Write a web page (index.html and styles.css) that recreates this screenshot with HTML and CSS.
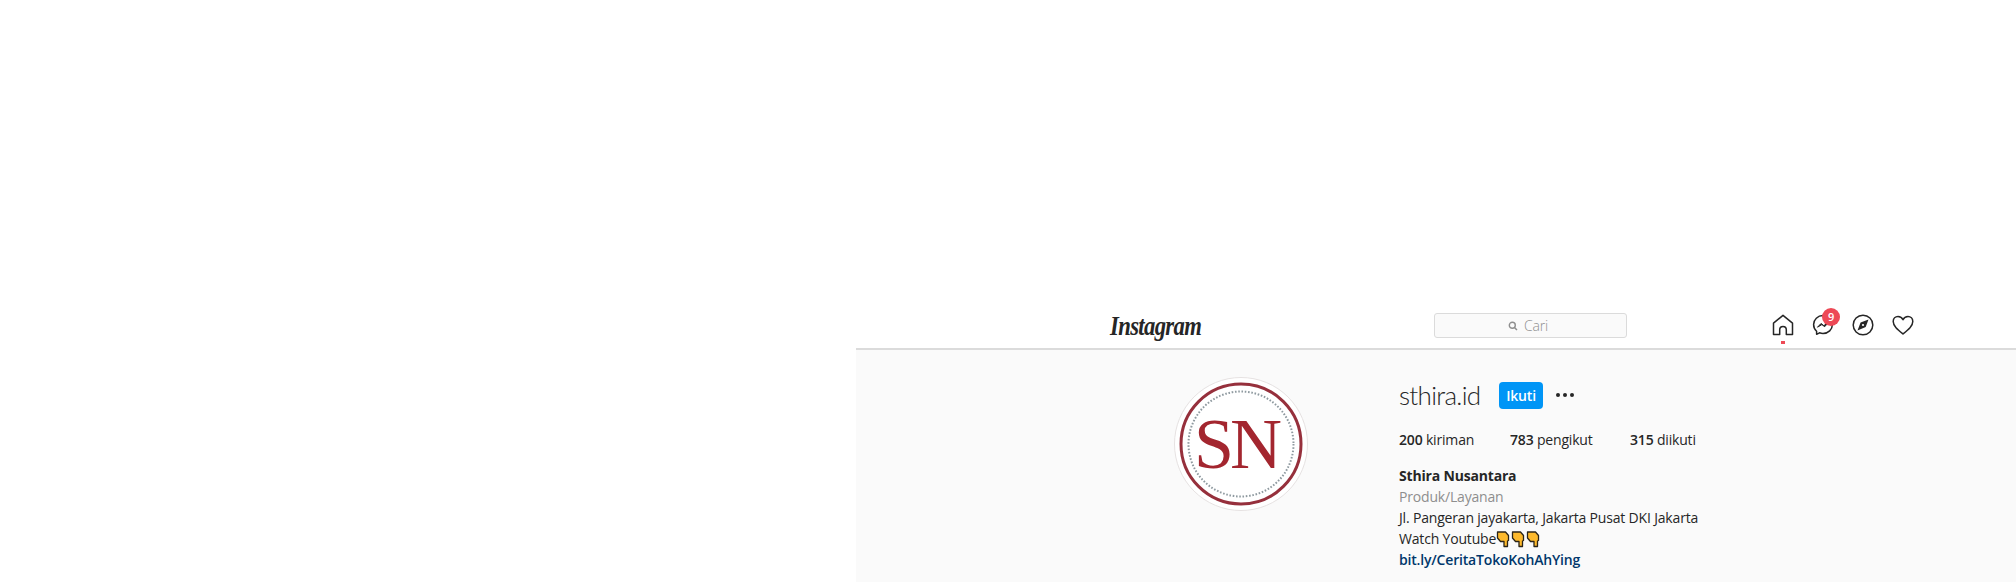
FILE: index.html
```html
<!DOCTYPE html>
<html lang="id">
<head>
<meta charset="utf-8">
<title>sthira.id</title>
<link rel="stylesheet" href="styles.css">
</head>
<body>
<div class="shell">
  <div class="blank"></div>
  <div class="app">
    <header class="nav">
      <div class="logo">Instagram</div>
      <div class="search">
        <svg class="search-icon" viewBox="0 0 10 10" width="10" height="10"><circle cx="4.3" cy="4.3" r="3" fill="none" stroke="#8e8e8e" stroke-width="1.4"/><path d="M6.5 6.500 9 9" stroke="#8e8e8e" stroke-width="1.500"/></svg>
        <span>Cari</span>
      </div>
      <nav class="icons">
        <div class="icon-cell">
          <svg viewBox="0 0 22 22" width="22" height="22"><path d="M1.500 9.200 11 1.300l9.500 7.900v11.300h-6.200v-4.800a3.300 3.300 0 0 0-6.600 0v4.800H1.500z" fill="none" stroke="#262626" stroke-width="1.500" stroke-linejoin="round"/></svg>
          <span class="dot"></span>
        </div>
        <div class="icon-cell">
          <svg viewBox="0 0 22 22" width="22" height="22"><path d="M11 1.600C5.700 1.600 1.600 5.500 1.600 10.600c0 2.700 1.100 5 3 6.600v3.100l2.900-1.500c1.100.4 2.300.6 3.500.6 5.300 0 9.400-3.900 9.400-8.800S16.300 1.600 11 1.600z" fill="none" stroke="#262626" stroke-width="1.500" stroke-linejoin="round"/><path d="M5.500 13.200 9 9.500l2.800 2.100 4.400-2.800-3.500 3.900-2.800-2.100z" fill="#262626" stroke="#262626" stroke-width="1" stroke-linejoin="round"/></svg>
          <span class="badge">9</span>
        </div>
        <div class="icon-cell">
          <svg viewBox="0 0 22 22" width="22" height="22"><circle cx="11" cy="11" r="9.800" fill="none" stroke="#262626" stroke-width="1.500"/><path d="M16.500 5.500 13.700 13 5.500 16.500 8.600 8.600z" fill="#262626"/><circle cx="11" cy="11" r="1.100" fill="#fff"/></svg>
        </div>
        <div class="icon-cell">
          <svg viewBox="0 0 22 22" width="22" height="22"><path d="M11 20C5.500 15.500 1.200 12 1.200 7.500c0-3 2.200-5 4.800-5 2.200 0 4 1.100 5 3.200 1-2.100 2.800-3.200 5-3.200 2.600 0 4.800 2 4.800 5C20.800 12 16.500 15.500 11 20z" fill="none" stroke="#262626" stroke-width="1.500" stroke-linejoin="round"/></svg>
        </div>
      </nav>
    </header>
    <main class="profile">
      <div class="avatar">
        <svg viewBox="0 0 134 134" width="134" height="134">
          <circle cx="67" cy="67" r="66.500" fill="#fff" stroke="#e6e2e2"/>
          <circle cx="67" cy="67" r="60" fill="none" stroke="#96303c" stroke-width="3"/>
          <circle cx="67" cy="67" r="52.500" fill="none" stroke="#8f9aa0" stroke-width="2" stroke-dasharray="1.600 1.700"/>
          <text class="mono" x="20" y="91">SN</text>
        </svg>
      </div>
      <section class="info">
        <div class="title-row">
          <h1 class="username">sthira.id</h1>
          <button class="follow">Ikuti</button>
          <div class="more"><i></i><i></i><i></i></div>
        </div>
        <ul class="stats">
          <li class="stat-a"><b>200</b> kiriman</li>
          <li class="stat-b"><b>783</b> pengikut</li>
          <li><b>315</b> diikuti</li>
        </ul>
        <div class="bio">
          <div class="name">Sthira Nusantara</div>
          <div class="category">Produk/Layanan</div>
          <div>Jl. Pangeran jayakarta, Jakarta Pusat DKI Jakarta</div>
          <div class="yt">Watch Youtube<svg class="hand" viewBox="0 0 15 18" width="15" height="18"><path d="M1.500 2h8l3 3.500v5l-1 .5v5.500H8v-5H4.500L1.500 8z" fill="#fdb92c" stroke="#2b2418" stroke-width="1.300" stroke-linejoin="round"/></svg><svg class="hand" viewBox="0 0 15 18" width="15" height="18"><path d="M1.500 2h8l3 3.500v5l-1 .5v5.500H8v-5H4.500L1.500 8z" fill="#fdb92c" stroke="#2b2418" stroke-width="1.300" stroke-linejoin="round"/></svg><svg class="hand" viewBox="0 0 15 18" width="15" height="18"><path d="M1.500 2h8l3 3.500v5l-1 .5v5.500H8v-5H4.500L1.500 8z" fill="#fdb92c" stroke="#2b2418" stroke-width="1.300" stroke-linejoin="round"/></svg></div>
          <a class="link" href="#">bit.ly/CeritaTokoKohAhYing</a>
        </div>
      </section>
    </main>
  </div>
</div>
</body>
</html>
```
FILE: styles.css
```css
* { box-sizing: border-box; }
html, body { margin: 0; height: 582px; overflow: hidden; background: #fff; }
body { font-family: "Open Sans", "Noto Sans", sans-serif; color: #262626; font-size: 14px; letter-spacing: -0.18px; }
.shell { display: flex; height: 582px; }
.blank { width: 856px; flex: none; }
.app { flex: 1; padding-top: 304px; display: flex; flex-direction: column; min-width: 0; }
.nav { height: 46px; display: flex; align-items: flex-start; background: #fff; border-bottom: 2px solid #dbdbdb; padding-left: 254px; }
.logo { width: 92px; margin-top: 6px; font: italic 700 28px/32px "Liberation Serif", serif; color: #262626; letter-spacing: -0.8px; white-space: nowrap; transform: scaleX(0.81); transform-origin: left center; }
.search { width: 193px; height: 25px; margin-top: 9px; margin-left: 232px; border: 1px solid #dbdbdb; border-radius: 3px; background: #fafafa; display: flex; align-items: center; justify-content: center; gap: 6px; color: #8e8e8e; font-size: 14px; font-weight: 300; padding-right: 5px; }
.search-icon { flex: none; }
.icons { display: flex; gap: 18px; margin-left: 145px; margin-top: 10px; }
.icon-cell { width: 22px; height: 22px; position: relative; }
.icon-cell svg { display: block; }
.dot { position: absolute; left: 9px; top: 27px; width: 4px; height: 3px; background: #ed4956; }
.badge { position: absolute; left: 10px; top: -6px; width: 18px; height: 18px; border-radius: 50%; background: #ed4956; color: #fff; font-size: 11px; font-weight: 600; line-height: 18px; text-align: center; }
.profile { flex: 1; background: #fafafa; display: flex; align-items: flex-start; padding-left: 318px; }
.avatar { width: 134px; height: 134px; margin-top: 27px; flex: none; }
.avatar svg { display: block; }
.mono { font-family: "Liberation Serif", serif; font-size: 72px; fill: #a3262f; letter-spacing: -4px; }
.info { margin-left: 91px; padding-top: 30px; }
.title-row { display: flex; align-items: center; height: 30px; }
.username { margin: 0; font-family: "Lato", "Open Sans", sans-serif; font-size: 26px; font-weight: 300; letter-spacing: -0.7px; line-height: 32px; width: 100px; color: #262626; white-space: nowrap; }
.follow { width: 44px; height: 27px; border: 0; border-radius: 4px; background: #0095f6; color: #fff; font-family: inherit; font-size: 14px; font-weight: 600; letter-spacing: -0.18px; padding: 0; }
.more { display: flex; gap: 3px; margin-left: 13px; }
.more i { width: 4px; height: 4px; border-radius: 50%; background: #262626; }
.stats { list-style: none; margin: 20px 0 0; padding: 0; display: flex; line-height: 20px; }
.stats li { white-space: nowrap; }
.stats b { font-weight: 600; }
.stat-a { width: 111px; }
.stat-b { width: 120px; }
.bio { margin-top: 15px; line-height: 21px; white-space: nowrap; }
.name { font-weight: 700; }
.category { color: #8e8e8e; }
.yt { display: flex; align-items: center; height: 21px; }
.hand { display: block; flex: none; }
.link { display: block; color: #00376b; font-weight: 600; text-decoration: none; }
```
